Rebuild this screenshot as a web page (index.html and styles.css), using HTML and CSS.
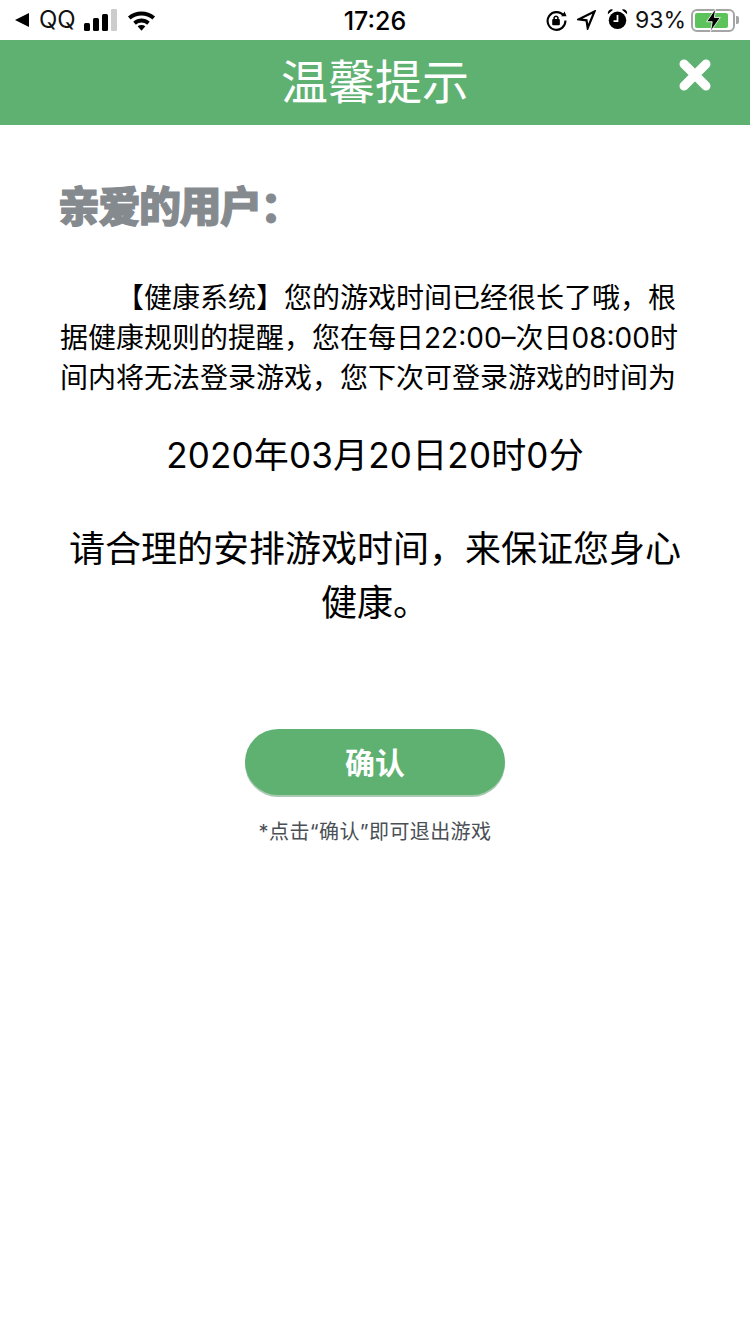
FILE: index.html
```html
<!DOCTYPE html><html>
<head><title>温馨提示</title>
	<meta charset="utf-8">
	<link rel="stylesheet" href="styles.css">
</head><body>
<div class="status">
	<div class="st-left">
		<svg class="ic-back" width="16" height="16" viewBox="0 0 16 16"><path d="M15 1V15L1 8Z"/></svg>
		<span class="st-txt">QQ</span>
		<svg class="ic-signal" width="34" height="22" viewBox="0 0 34 22">
			<rect x="0" y="14" width="6" height="8" rx="1.5"/>
			<rect x="9" y="9" width="6" height="13" rx="1.5"/>
			<rect x="18" y="5" width="6" height="17" rx="1.5"/>
			<rect class="off" x="27" y="0" width="6" height="22" rx="1"/>
		</svg>
		<svg class="ic-wifi" width="29" height="22" viewBox="0 0 30 22">
			<path d="M1 7.500C9 .5 21 .5 29 7.500L26.300 10.500C20 5 10 5 3.700 10.500Z"/>
			<path d="M6.500 12.800C11.500 8.500 18.500 8.500 23.500 12.800L20.800 15.800C17.300 12.900 12.700 12.900 9.200 15.800Z"/>
			<path d="M11 17.500C13.300 15.800 16.700 15.800 19 17.500L15 22Z"/>
		</svg>
	</div>
	<div class="st-time">17:26</div>
	<div class="st-right">
		<svg class="ic-lock" width="21" height="21" viewBox="0 0 22 22" fill="none">
			<path class="ln" d="M18.500 6A9.300 9.300 0 1 0 20.300 11"/>
			<path d="M16 6.500H21.500L19.500 1.500Z" class="fl"/>
			<rect class="fl" x="6.500" y="9.500" width="8" height="6.500" rx="1"/>
			<path class="thin" d="M8.500 9.500V7.800A2.200 2.200 0 0 1 12.500 7.800V9.500"/>
		</svg>
		<svg class="ic-loc" width="19" height="20" viewBox="0 0 19 20" fill="none"><path class="ln" d="M17.500 1.500L1.800 9.300L9.500 10.300L10.700 18Z"/></svg>
		<svg class="ic-alarm" width="21" height="22" viewBox="0 0 24 25">
			<circle cx="12" cy="14" r="10"/>
			<path d="M1 7A4.500 4.500 0 0 1 7 1.800ZM23 7A4.500 4.500 0 0 0 17 1.800Z"/>
			<path class="hand" d="M12 8V15H7.500"/>
		</svg>
		<span class="st-txt pct">93%</span>
		<div class="batt">
			<div class="batt-box"><div class="batt-fill" style="width:93%"></div></div>
			<div class="batt-tip"></div>
			<svg class="ic-bolt" width="17" height="24" viewBox="0 0 20 28"><path d="M12.500 0.500L2 16H8.500L6.500 27.500L18 11H11Z" stroke="#fff" stroke-width="1"/></svg>
		</div>
	</div>
</div>

<div class="head">
	<h1>温馨提示</h1>
	<svg class="ic-close" width="32" height="32" viewBox="0 0 32 32"><path d="M5 5L27 27M27 5L5 27"/></svg>
</div>

<div class="main">
	<h2>亲爱的用户：</h2>
	<p class="msg">【健康系统】您的游戏时间已经很长了哦，根据健康规则的提醒，您在每日22:00–次日08:00时间内将无法登录游戏，您下次可登录游戏的时间为</p>
	<p class="date">2020年03月20日20时0分</p>
	<p class="tip">请合理的安排游戏时间，来保证您身心健康。</p>
	<button class="btn">确认</button>
	<p class="note">*点击“确认”即可退出游戏</p>
</div>
</body></html>
```

FILE: styles.css
```css
html,body{margin:0;padding:0;background:#fff;}
body{font-family:Inter,"Noto Sans CJK SC",sans-serif;color:#000;}
h1,h2,p{margin:0;font-weight:normal;}

.status{height:40px;display:flex;align-items:center;justify-content:space-between;position:relative;padding:0 10px 0 14px;box-sizing:border-box;}
.st-left,.st-right{display:flex;align-items:center;}
.st-txt{font:24px/40px Inter,sans-serif;color:#111;}
.ic-back{margin-right:9px;}
.ic-signal{margin-left:8px;}
.ic-wifi{margin-left:9px;}
.off{fill:#ccc;}
.st-time{position:absolute;left:0;right:0;top:1px;text-align:center;font:500 25px/40px Inter,sans-serif;}
.st-right svg{display:block;}
.ln{stroke:#000;stroke-width:2.2;}
.fl{fill:#000;}
.thin{stroke:#000;stroke-width:1.6;fill:none;}
.hand{stroke:#fff;stroke-width:2;fill:none;}
.ic-loc{margin-left:10px;}
.ic-alarm{margin-left:11px;margin-top:-2px;}
.pct{margin-left:7px;font-size:23px;}
.batt{position:relative;display:flex;align-items:center;margin-left:5px;width:49px;height:28px;}
.batt-box{width:44px;height:23px;border:2px solid #a5a5a5;border-radius:6px;padding:2px;box-sizing:border-box;}
.batt-fill{height:100%;background:#5cc25a;border-radius:2px;}
.batt-tip{width:3px;height:8px;background:#a5a5a5;border-radius:0 2px 2px 0;margin-left:1px;}
.ic-bolt{position:absolute;left:14px;top:2px;}

.head{height:85px;background:#5fb172;position:relative;display:flex;align-items:center;justify-content:center;}
.head h1{font-size:47px;line-height:80px;color:#fff;font-weight:400;margin-top:-2px;}
.ic-close{position:absolute;right:39px;top:19px;}
.ic-close path{stroke:#fff;stroke-width:9;stroke-linecap:round;fill:none;}

.main{padding:0 60px;}
.main h2{margin-top:52px;margin-left:-2px;font-size:42px;line-height:60px;font-weight:900;color:#858a8f;letter-spacing:-1.500px;-webkit-text-stroke:1.200px #858a8f;}
.msg{margin-top:41px;font-size:28px;line-height:40px;text-indent:56px;}
.date{margin-top:32px;font-size:35px;letter-spacing:.2px;line-height:50px;text-align:center;}
.tip{margin-top:42px;font-size:36px;line-height:54px;text-align:center;}
.btn{display:block;margin:99px auto 0;width:260px;height:66px;border:none;border-radius:33px;background:#5fb172;box-shadow:0 2px 0 #a9c9b0;color:#fff;font:bold 30px "Noto Sans CJK SC",sans-serif;padding:0 0 3px;}
.note{margin-top:22px;font-size:20px;letter-spacing:.4px;line-height:30px;text-align:center;color:#4a4f55;}
```
